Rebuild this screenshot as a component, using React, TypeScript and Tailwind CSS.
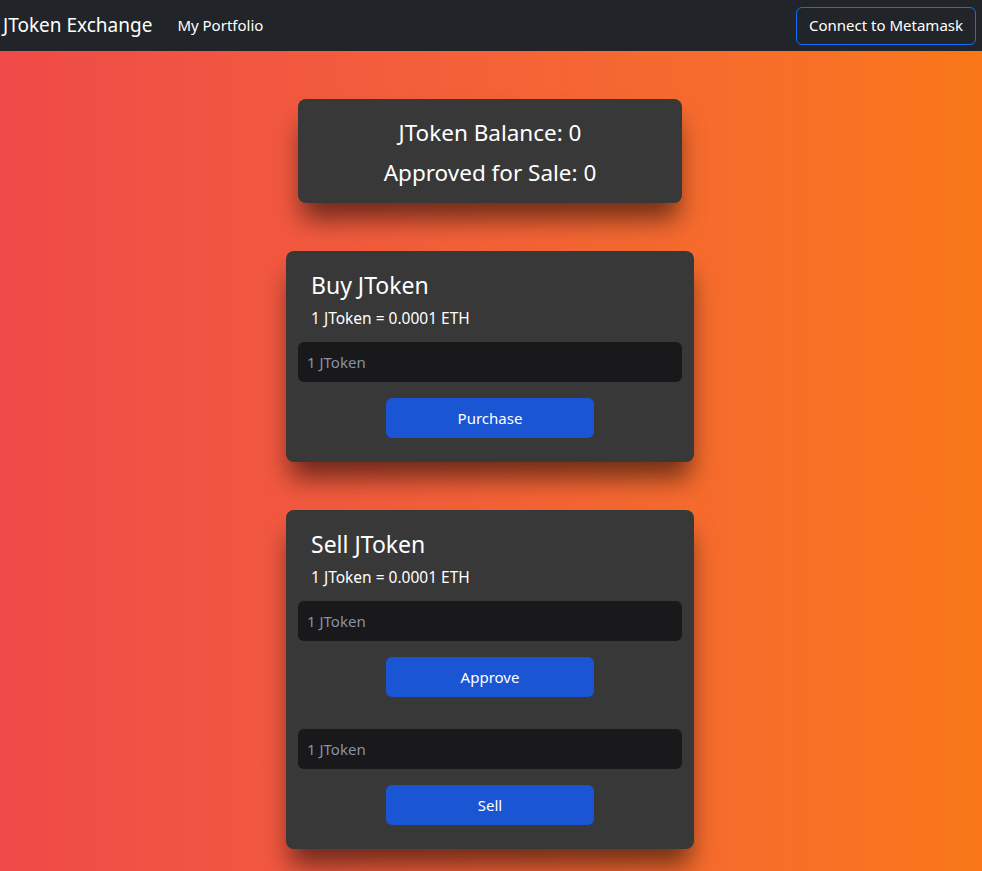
const font = { fontFamily: '"Segoe UI", "Noto Sans", sans-serif' };

const AmountInput = () => (
  <input
    type="text"
    placeholder="1 JToken"
    className="h-10 w-full rounded-md bg-[#19191b] px-[9px] text-[15px] text-white outline-none placeholder:text-[#8593a5]"
  />
);

const ActionButton = ({ label }: { label: string }) => (
  <button className="mx-auto h-10 w-[208px] rounded-md bg-[#1a55d4] text-[15px] text-white">{label}</button>
);

const CardHead = ({ title }: { title: string }) => (
  <div className="px-[13px] pt-[18px]">
    <h3 className="text-[23px] leading-8 text-white">{title}</h3>
    <p className="mt-[5px] text-[15.5px] leading-6 text-white">1 JToken = 0.0001 ETH</p>
  </div>
);

export default function App() {
  return (
    <div className="min-h-[871px] bg-gradient-to-r from-[#ef4a48] to-[#f97718]" style={font}>
      {/* top bar */}
      <nav className="flex h-[51px] items-center justify-between bg-[#212529] pl-[3px] pr-[6px]">
        <div className="flex items-center gap-[25px]">
          <span className="text-[19px] text-white">JToken Exchange</span>
          <span className="text-[15px] text-white">My Portfolio</span>
        </div>
        <button className="h-[38px] rounded-md border border-[#0d6efd] px-3 text-[15px] text-white">
          Connect to Metamask
        </button>
      </nav>

      <main className="flex flex-col items-center gap-12 pt-12 pr-[2px] pb-6">
        <div className="w-[384px] rounded-lg bg-[#383838] pt-[14px] pb-[10px] text-center shadow-[0_20px_26px_-4px_rgba(0,0,0,0.55)]">
          <p className="text-[22.5px] leading-10 text-white">JToken Balance: 0</p>
          <p className="text-[22.5px] leading-10 text-white">Approved for Sale: 0</p>
        </div>

        <div className="w-[408px] rounded-lg bg-[#383838] px-3 pb-6 shadow-[0_20px_26px_-4px_rgba(0,0,0,0.55)]">
          <CardHead title="Buy JToken" />
          <div className="mt-3 flex flex-col gap-4">
            <AmountInput />
            <ActionButton label="Purchase" />
          </div>
        </div>

        <div className="w-[408px] rounded-lg bg-[#383838] px-3 pb-6 shadow-[0_20px_26px_-4px_rgba(0,0,0,0.55)]">
          <CardHead title="Sell JToken" />
          <div className="mt-3 flex flex-col gap-4">
            <AmountInput />
            <ActionButton label="Approve" />
          </div>
          <div className="mt-8 flex flex-col gap-4">
            <AmountInput />
            <ActionButton label="Sell" />
          </div>
        </div>
      </main>
    </div>
  );
}
